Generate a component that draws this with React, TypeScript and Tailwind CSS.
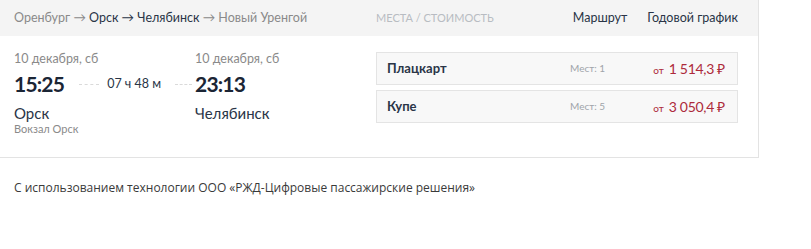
import React from 'react';

const seats = [
    { name: 'Плацкарт', count: 1, price: '1 514,3' },
    { name: 'Купе', count: 5, price: '3 050,4' },
];

export default function App() {
    return (
        <div className="w-[811px] h-[249px] overflow-hidden bg-white font-['Lato',sans-serif] text-[#1e2a3a]">
            <div className="w-[759px] border-r border-b border-[#e3e3e3]">
                {/* header */}
                <div className="h-[36px] bg-[#f4f4f4] flex items-center pl-[14px] pr-[20px] text-[12.5px]">
                    <div className="w-[362px] text-[#8a8a8a]">
                        Оренбург → <span className="text-[#2a3547]">Орск → Челябинск</span> → Новый Уренгой
                    </div>
                    <div className="text-[11px] text-[#b8bcc2]">МЕСТА / СТОИМОСТЬ</div>
                    <div className="ml-auto flex gap-[20px] text-[#2a3547]">
                        <span>Маршрут</span>
                        <span>Годовой график</span>
                    </div>
                </div>

                {/* body */}
                <div className="flex pl-[14px] pt-[15px] pb-[21px]">
                    <div className="w-[362px]">
                        <div className="flex text-[12.5px] text-[#8a8a8a] leading-[16px]">
                            <span className="w-[181px]">10 декабря, сб</span>
                            <span>10 декабря, сб</span>
                        </div>
                        <div className="flex items-center mt-[4px] h-[26px]">
                            <div className="w-[181px] flex items-center">
                                <span className="text-[21px] font-bold tracking-[-0.8px] text-[#1b2535]">15:25</span>
                                <span className="ml-[15px] w-[20px] border-t border-dashed border-[#dadada]" />
                                <span className="ml-[8px] text-[12.5px] text-[#2a3547]">07 ч 48 м</span>
                                <span className="ml-[14px] w-[17px] border-t border-dashed border-[#dadada]" />
                            </div>
                            <span className="text-[21px] font-bold tracking-[-0.8px] text-[#1b2535]">23:13</span>
                        </div>
                        <div className="flex text-[15px] mt-[7px] leading-[18px] text-[#2a3547]">
                            <span className="w-[181px]">Орск</span>
                            <span>Челябинск</span>
                        </div>
                        <div className="text-[11px] text-[#8a8a8a] leading-[14px]">Вокзал Орск</div>
                    </div>

                    <div className="w-[362px] flex flex-col gap-[5px] mt-[1px]">
                        {seats.map(s => (
                            <div
                                key={s.name}
                                className="h-[33px] bg-[#f8f8f8] border border-[#e4e4e4] flex items-center pl-[10px] pr-[12px]"
                            >
                                <span className="w-[183px] text-[13px] font-bold text-[#2a3547]">{s.name}</span>
                                <span className="text-[10px] text-[#a0a4aa]">Мест: {s.count}</span>
                                <span className="ml-auto text-[#ad2a3b] flex items-baseline gap-[5px]">
                                    <span className="text-[10px]">от</span>
                                    <span className="text-[14px] tracking-[-0.3px]">{s.price} ₽</span>
                                </span>
                            </div>
                        ))}
                    </div>
                </div>
            </div>

            <div className="pl-[14px] pt-[21px] text-[12px] text-[#3a3a3a] font-['Liberation_Sans_Narrow','Open_Sans',sans-serif]">
                С использованием технологии ООО «РЖД-Цифровые пассажирские решения»
            </div>
        </div>
    );
}
